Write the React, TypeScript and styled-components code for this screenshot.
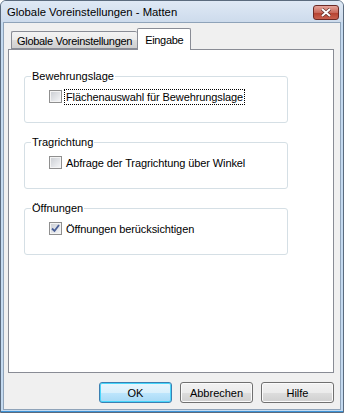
import React, { FunctionComponent } from 'react';
import styled, { createGlobalStyle } from 'styled-components';

const GlobalStyle = createGlobalStyle`
	html, body { margin: 0; padding: 0; background: #ffffff; }
	* { box-sizing: border-box; }
`;

const Window = styled.div`
	width: 344px;
	height: 413px;
	display: flex;
	flex-direction: column;
	border: 1px solid #5b6b7e;
	border-radius: 6px 6px 0 0;
	background: #c4daf0;
	padding: 0 2px 2px 2px;
	font-family: 'Liberation Sans', Arial, sans-serif;
	font-size: 11px;
	color: #000;
	box-shadow: inset 0 -1px 0 #3d93d6;
`;

const TitleBar = styled.div`
	height: 21px;
	margin: 0 -2px;
	padding: 0 4px 0 6px;
	display: flex;
	align-items: center;
	justify-content: space-between;
	border-radius: 5px 5px 0 0;
	background: linear-gradient(#dfe9f5, #cddbec);
`;

const Title = styled.span`
	font-size: 11.3px;
	color: #000;
`;

const CloseButton = styled.div`
	width: 26px;
	height: 15px;
	margin-top: 2px;
	border: 1px solid #6b2a26;
	border-radius: 3px;
	background: linear-gradient(#e6a59c, #c96a5c 50%, #b4402f 51%, #c8614f);
	display: flex;
	align-items: center;
	justify-content: center;
`;

const Client = styled.div`
	flex: 1;
	display: flex;
	flex-direction: column;
	border: 1px solid #8fa3b9;
	background: #f0f0f0;
	padding: 5px 6px 5px 4px;
`;

const TabStrip = styled.div`
	height: 21px;
	display: flex;
	align-items: flex-end;
	padding-left: 3px;
	position: relative;
	z-index: 1;
`;

const Tab = styled.div<{ $active?: boolean }>`
	height: ${(p) => (p.$active ? '22px' : '18px')};
	padding: ${(p) => (p.$active ? '1px 7px 0 7px' : '1px 5px 0 5px')};
	border: 1px solid #898c95;
	border-bottom: ${(p) => (p.$active ? 'none' : '1px solid #898c95')};
	border-right: ${(p) => (p.$active ? '1px solid #898c95' : 'none')};
	border-radius: 2px 2px 0 0;
	background: ${(p) => (p.$active ? '#ffffff' : 'linear-gradient(#f3f3f3, #ebebeb 50%, #dddddd 51%, #cfcfcf)')};
	margin-bottom: ${(p) => (p.$active ? '-1px' : '0')};
	display: flex;
	align-items: center;
	font-size: 11px;
	letter-spacing: -0.3px;
`;

const Panel = styled.div`
	height: 324px;
	border: 1px solid #898c95;
	background: #ffffff;
	padding: 20px 0 0 15px;
`;

const Group = styled.fieldset`
	width: 264px;
	margin: 0 0 13px 0;
	padding: 6px 0 17px 0;
	border: 1px solid #d5dfe5;
	border-radius: 3px;
`;

const Legend = styled.legend`
	margin-left: 6px;
	padding: 0 1px;
	line-height: 13px;
	font-size: 11px;
`;

const CheckRow = styled.div`
	display: flex;
	align-items: center;
	height: 16px;
	margin-left: 24px;
	letter-spacing: -0.1px;
`;

const Box = styled.span`
	width: 13px;
	height: 13px;
	flex: none;
	border: 1px solid #8f8f8f;
	background: #f4f4f4;
	padding: 1px;
	display: flex;
	margin-top: -2px;
`;

const BoxInner = styled.span`
	flex: 1;
	background: linear-gradient(135deg, #cdd0d5, #f3f4f6);
	display: flex;
	align-items: center;
	justify-content: center;
`;

const CheckLabel = styled.span<{ $focused?: boolean }>`
	margin-left: 2px;
	padding: 0 1px;
	height: 16px;
	line-height: 14px;
	border: 1px dotted ${(p) => (p.$focused ? '#000' : 'transparent')};
`;

const ButtonRow = styled.div`
	display: flex;
	justify-content: flex-end;
	gap: 8px;
	margin-top: 9px;
`;

const Button = styled.button<{ $default?: boolean }>`
	width: 73px;
	height: 21px;
	padding: 0;
	font-family: 'Liberation Sans', Arial, sans-serif;
	font-size: 11px;
	color: #000;
	border-radius: 3px;
	border: 1px solid ${(p) => (p.$default ? '#3c7fb1' : '#707070')};
	background: ${(p) =>
		p.$default
			? 'linear-gradient(#eaf6fd, #d9f0fc 50%, #bee6fd 51%, #a7d9f5)'
			: 'linear-gradient(#f2f2f2, #ebebeb 50%, #dddddd 51%, #cfcfcf)'};
	box-shadow: inset 0 0 0 1px ${(p) => (p.$default ? '#48d6fb' : '#fbfbfb')};
`;

const CheckBox: FunctionComponent<{ checked?: boolean }> = ({ checked }) => (
	<Box>
		<BoxInner>
			{checked && (
				<svg width="9" height="9" viewBox="0 0 9 9">
					<path d="M1 4.5 L3.5 7 L8 1" fill="none" stroke="#4a5f97" strokeWidth="1.8" />
				</svg>
			)}
		</BoxInner>
	</Box>
);

const groups = [
	{ title: 'Bewehrungslage', label: 'Flächenauswahl für Bewehrungslage', checked: false, focused: true },
	{ title: 'Tragrichtung', label: 'Abfrage der Tragrichtung über Winkel', checked: false, focused: false },
	{ title: 'Öffnungen', label: 'Öffnungen berücksichtigen', checked: true, focused: false },
];

const App: FunctionComponent = () => {
	return (
		<>
			<GlobalStyle />
			<Window>
				<TitleBar>
					<Title>Globale Voreinstellungen - Matten</Title>
					<CloseButton>
						<svg width="12" height="9" viewBox="0 0 12 9">
							<path d="M2 1 L10 8 M10 1 L2 8" stroke="#5a2a26" strokeWidth="3.2" />
							<path d="M2 1 L10 8 M10 1 L2 8" stroke="#ffffff" strokeWidth="2" />
						</svg>
					</CloseButton>
				</TitleBar>
				<Client>
					<TabStrip>
						<Tab>Globale Voreinstellungen</Tab>
						<Tab $active>Eingabe</Tab>
					</TabStrip>
					<Panel>
						{groups.map((g) => (
							<Group key={g.title}>
								<Legend>{g.title}</Legend>
								<CheckRow>
									<CheckBox checked={g.checked} />
									<CheckLabel $focused={g.focused}>{g.label}</CheckLabel>
								</CheckRow>
							</Group>
						))}
					</Panel>
					<ButtonRow>
						<Button $default>OK</Button>
						<Button>Abbrechen</Button>
						<Button>Hilfe</Button>
					</ButtonRow>
				</Client>
			</Window>
		</>
	);
};

export default App;
